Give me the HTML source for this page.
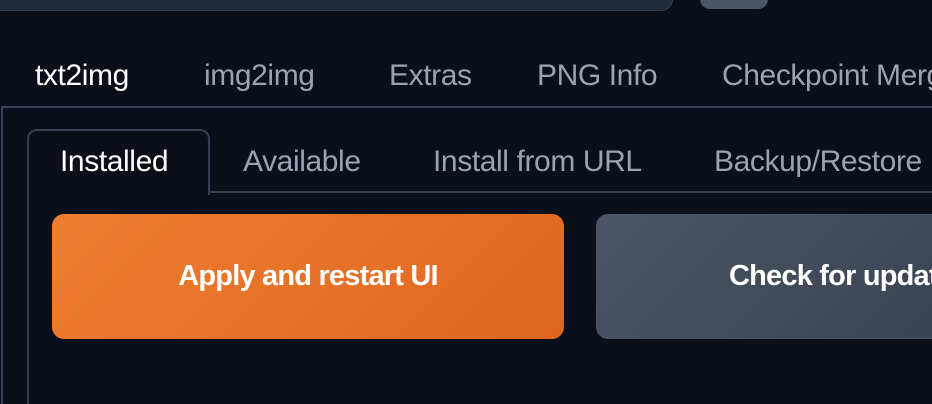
<!DOCTYPE html>
<html><head><style>
html,body{margin:0;width:932px;height:404px;overflow:hidden;}
body{background:#0b0f19;position:relative;font-family:"Liberation Sans",sans-serif;}
.a{position:absolute;}
.t{position:absolute;font-size:30px;color:#9ca3af;white-space:nowrap;letter-spacing:-0.4px;line-height:1;}
</style></head><body>
<div class="a" style="left:-20px;top:-20px;width:691px;height:29px;background:#1f2937;border:1px solid #374151;border-radius:12px;"></div>
<div class="a" style="left:700px;top:-20px;width:68px;height:29px;background:#4b5563;border-radius:10px;"></div>

<div class="t" style="left:35px;top:61px;color:#fff">txt2img</div>
<div class="t" style="left:204px;top:61px">img2img</div>
<div class="t" style="left:389px;top:61px">Extras</div>
<div class="t" style="left:537px;top:61px">PNG Info</div>
<div class="t" style="left:722px;top:61px">Checkpoint Merger</div>

<div class="a" style="left:1px;top:106px;width:940px;height:300px;border-left:2px solid #374151;border-top:2px solid #374151;"></div>

<div class="a" style="left:27px;top:191px;width:910px;height:215px;border-left:2px solid #374151;border-top:2px solid #374151;"></div>
<div class="a" style="left:27px;top:129px;width:179px;height:64px;border:2px solid #374151;border-bottom:none;border-radius:10px 10px 0 0;background:#0b0f19;"></div>

<div class="t" style="left:60px;top:147px;color:#fff">Installed</div>
<div class="t" style="left:243px;top:147px">Available</div>
<div class="t" style="left:433px;top:147px">Install from URL</div>
<div class="t" style="left:714px;top:147px">Backup/Restore</div>

<div class="a" style="left:52px;top:214px;width:512px;height:125px;border-radius:12px;background:linear-gradient(135deg,#ed7e30,#e0661f);display:flex;align-items:center;justify-content:center;color:#fff;font-weight:bold;font-size:29px;letter-spacing:-0.8px;">Apply and restart UI</div>
<div class="a" style="left:596px;top:214px;width:400px;height:125px;border-radius:12px;background:linear-gradient(135deg,#4b5563,#374151);border:1px solid #4b5563;box-sizing:border-box;color:#fff;font-weight:bold;font-size:29px;letter-spacing:-0.8px;"><span style="position:absolute;left:132px;top:46px;white-space:nowrap;line-height:1.1">Check for updates</span></div>
</body></html>
